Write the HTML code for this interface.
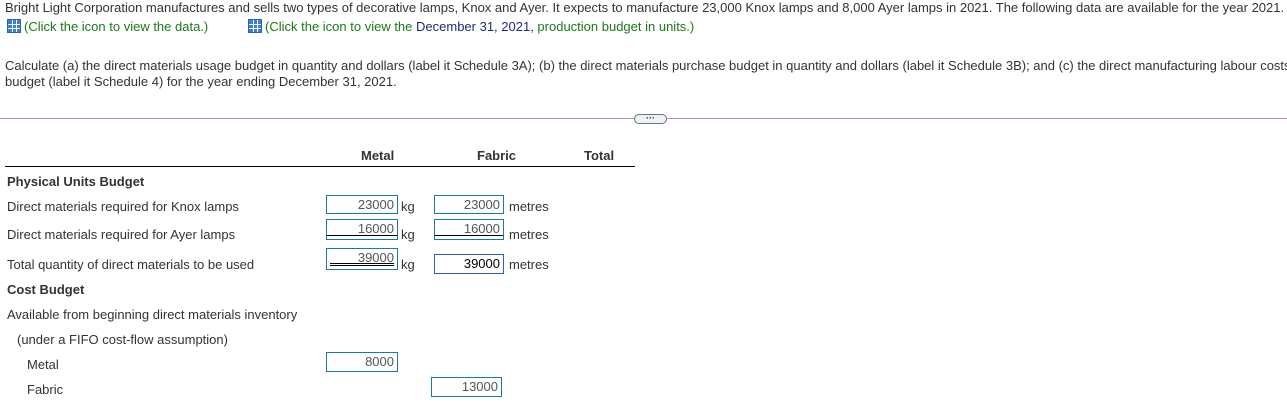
<!DOCTYPE html>
<html><head><style>
body{margin:0;width:1287px;height:405px;background:#fff;font-family:"Liberation Sans",Arial,sans-serif;font-size:13px;color:#333;position:relative;overflow:hidden}
.a{position:absolute;white-space:nowrap}
.g{color:#1a7a1a}
.n{color:#1f2b7a}
.ic{display:inline-block;width:14px;height:14px;vertical-align:-2px;margin-right:3px;background:
linear-gradient(#fff,#fff) 4px 0/1px 14px no-repeat,linear-gradient(#fff,#fff) 8px 0/1px 14px no-repeat,
linear-gradient(#fff,#fff) 0 4px/14px 1px no-repeat,linear-gradient(#fff,#fff) 0 8px/14px 1px no-repeat,#3a7fd0;border:1px solid #2a66b0;box-sizing:border-box}
.b{position:absolute;border:1px solid #1a7a9a;height:19px;box-sizing:border-box;text-align:right;padding-right:3px;font-size:13px;line-height:17px;color:#555}
.u1{box-shadow:inset 0 -3px 0 #fff,inset 0 -4px 0 #000}
.u2{background:linear-gradient(#000,#000) 3px 14px/calc(100% - 6px) 1px no-repeat,linear-gradient(#000,#000) 3px 16px/calc(100% - 6px) 1px no-repeat}
.h{font-weight:bold}
</style></head><body>
<div class="a" style="left:5px;top:0px">Bright Light Corporation manufactures and sells two types of decorative lamps, Knox and Ayer. It expects to manufacture 23,000 Knox lamps and 8,000 Ayer lamps in 2021. The following data are available for the year 2021.</div>
<div class="a g" style="left:7px;top:19px"><span class="ic"></span>(Click the icon to view the data.)</div>
<div class="a g" style="left:248px;top:19px"><span class="ic"></span>(Click the icon to view the <span class="n">December 31, 2021,</span> production budget in units.)</div>
<div class="a" style="left:5px;top:58px">Calculate (a) the direct materials usage budget in quantity and dollars (label it Schedule 3A); (b) the direct materials purchase budget in quantity and dollars (label it Schedule 3B); and (c) the direct manufacturing labour costs</div>
<div class="a" style="left:5px;top:74px">budget (label it Schedule 4) for the year ending December 31, 2021.</div>
<div class="a" style="left:0;top:118px;width:1287px;height:1px;background:#b8909e"></div>
<div class="a" style="left:634px;top:114px;width:31px;height:8px;border:1px solid #6a7480;border-radius:5px;background:#eef1f5;font-size:9px;line-height:6px;text-align:center;color:#333;font-weight:bold">···</div>
<div class="a h" style="left:361px;top:148px">Metal</div>
<div class="a h" style="left:477px;top:148px">Fabric</div>
<div class="a h" style="left:584px;top:148px">Total</div>
<div class="a" style="left:5px;top:166px;width:630px;height:1px;background:#000"></div>
<div class="a h" style="left:7px;top:174px">Physical Units Budget</div>
<div class="a" style="left:7px;top:199px">Direct materials required for Knox lamps</div>
<div class="a" style="left:7px;top:227px">Direct materials required for Ayer lamps</div>
<div class="a" style="left:7px;top:257px">Total quantity of direct materials to be used</div>
<div class="a h" style="left:7px;top:282px">Cost Budget</div>
<div class="a" style="left:7px;top:307px">Available from beginning direct materials inventory</div>
<div class="a" style="left:17px;top:332px">(under a FIFO cost-flow assumption)</div>
<div class="a" style="left:27px;top:357px">Metal</div>
<div class="a" style="left:27px;top:382px">Fabric</div>
<div class="b" style="left:326px;top:195px;width:72px">23000</div><div class="a" style="left:401px;top:199px">kg</div>
<div class="b" style="left:434px;top:195px;width:70px">23000</div><div class="a" style="left:509px;top:199px">metres</div>
<div class="b u1" style="left:326px;top:219px;width:72px;height:21px">16000</div><div class="a" style="left:401px;top:227px">kg</div>
<div class="b u1" style="left:434px;top:219px;width:70px;height:21px">16000</div><div class="a" style="left:509px;top:227px">metres</div>
<div class="b u2" style="left:326px;top:248px;width:72px;height:22px">39000</div><div class="a" style="left:401px;top:257px">kg</div>
<div class="b" style="left:434px;top:254px;width:70px;height:20px;border-color:#2a5fc8;color:#000">39000</div><div class="a" style="left:509px;top:257px">metres</div>
<div class="b" style="left:326px;top:352px;width:72px;height:20px">8000</div>
<div class="b" style="left:431px;top:377px;width:71px;height:20px">13000</div>
</body></html>
